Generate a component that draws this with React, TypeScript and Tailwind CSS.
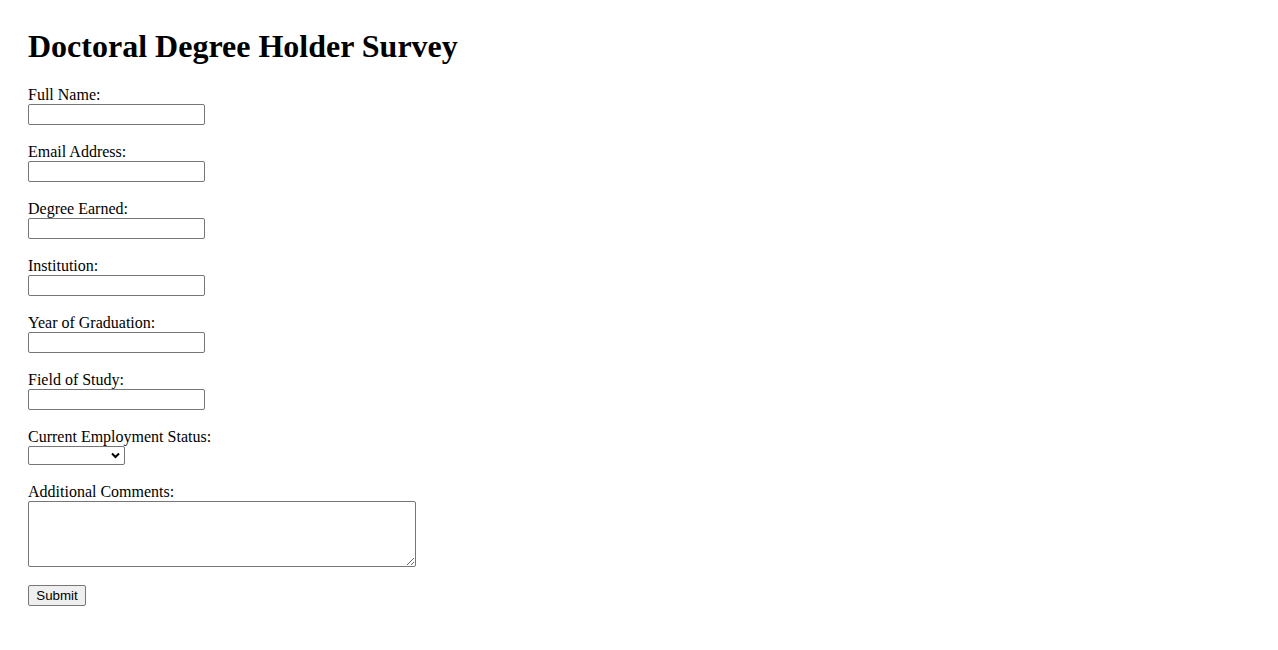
const fields = [
  'Full Name:',
  'Email Address:',
  'Degree Earned:',
  'Institution:',
  'Year of Graduation:',
  'Field of Study:',
];

const labelClass = 'block h-[18px] text-[16px] leading-[18px] text-black';

export default function App() {
  return (
    <div className="min-h-[650px] bg-white pl-[28px] pt-[28px] font-['Liberation_Serif',serif] text-black">
      <h1 className="mb-[21px] h-[37px] text-[32px] font-bold leading-[37px]">
        Doctoral Degree Holder Survey
      </h1>
      <form className="flex flex-col gap-[18px]" onSubmit={(e) => e.preventDefault()}>
        {fields.map((label) => (
          <div key={label}>
            <label className={labelClass}>{label}</label>
            <input
              type="text"
              className="block h-[21px] w-[177px] rounded-[2px] border border-[#767676] bg-white px-[2px] text-[13px]"
            />
          </div>
        ))}
        <div>
          <label className={labelClass}>Current Employment Status:</label>
          <div className="relative h-[19px] w-[97px]">
            <select className="block h-[19px] w-[97px] appearance-none rounded-[2px] border border-[#767676] bg-white text-[13px]">
              <option value=""></option>
              <option>Employed</option>
              <option>Unemployed</option>
            </select>
            <svg
              className="pointer-events-none absolute right-[5px] top-[6px]"
              width="9"
              height="7"
              viewBox="0 0 9 7"
              fill="none"
            >
              <path d="M1 1.5L4.5 5L8 1.5" stroke="#000" strokeWidth="2" />
            </svg>
          </div>
        </div>
        <div>
          <label className={labelClass}>Additional Comments:</label>
          <textarea className="block h-[66px] w-[388px] rounded-[2px] border border-[#767676] bg-white text-[13px]" />
        </div>
        <div className="-mt-[2px]">
          <button
            type="submit"
            className="h-[21px] w-[58px] rounded-[2px] border border-[#767676] bg-[#efefef] font-['Liberation_Sans',Arial,sans-serif] text-[13.33px] leading-[19px]"
          >
            Submit
          </button>
        </div>
      </form>
    </div>
  );
}
